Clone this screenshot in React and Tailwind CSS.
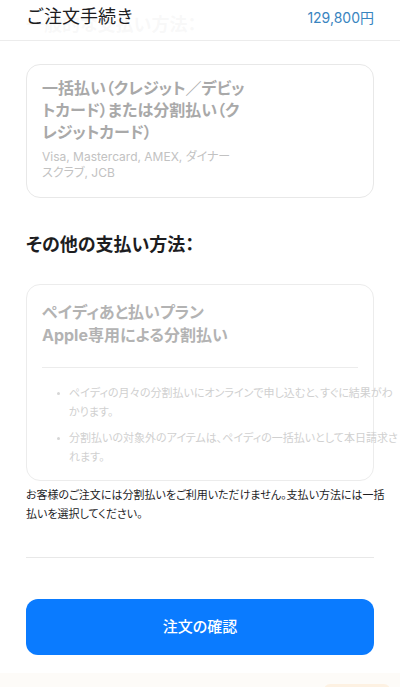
import React from "react";

const font = {
  fontFamily: 'Inter, "Noto Sans CJK JP", sans-serif',
};

const Bullet = ({ lines }) => (
  <li className="flex items-start pl-[15px]">
    <span className="mt-[8px] w-[3px] h-[3px] rounded-full bg-[#d6d6d6] shrink-0" />
    <span className="ml-[9px] whitespace-nowrap">
      {lines.map((l) => (
        <span key={l} className="block">
          {l}
        </span>
      ))}
    </span>
  </li>
);

export default function App() {
  return (
    <div
      className="relative h-[687px] overflow-hidden bg-white text-[#1d1d1f] [font-feature-settings:'palt']"
      style={font}
    >
      {/* sticky header over the scrolled content */}
      <header className="absolute top-0 inset-x-0 z-10 h-[41px] bg-white/[0.97] border-b border-[#ececec] flex items-center justify-between px-[26px] pb-[6px]">
        <h1 className="text-[18px] leading-[26px] [font-feature-settings:normal]">ご注文手続き</h1>
        <span className="text-[14px] text-[#3985bf]">129,800円</span>
      </header>

      <main className="px-[26px] pt-[12px]">
        <h2 className="text-[18px] leading-[26px] font-bold">一般的な支払い方法：</h2>

        <div className="mt-[26px] border border-[#e8e8e8] rounded-[14px] px-[15px] pt-[12px] pb-[16px]">
          <div className="text-[16px] leading-[22px] font-bold text-[#a9a9a9] whitespace-nowrap">
            <span className="block">一括払い（クレジット／デビッ</span>
            <span className="block">トカード）または分割払い（ク</span>
            <span className="block">レジットカード）</span>
          </div>
          <div className="mt-[6px] text-[12px] leading-[16px] text-[#c2c2c2] whitespace-nowrap">
            <span className="block">Visa, Mastercard, AMEX, ダイナー</span>
            <span className="block">スクラブ, JCB</span>
          </div>
        </div>

        <h2 className="mt-[34px] text-[18px] leading-[26px] font-bold">その他の支払い方法：</h2>

        <div className="mt-[26px] border border-[#ececec] rounded-[14px] px-[15px] pt-[16px] pb-[13px]">
          <div className="text-[16px] leading-[23px] font-bold text-[#b3b3b3] whitespace-nowrap">
            <span className="block">ペイディあと払いプラン</span>
            <span className="block">Apple専用による分割払い</span>
          </div>
          <div className="mt-[20px] h-px bg-[#ececec]" />
          <ul className="mt-[16px] flex flex-col gap-[7px] text-[11px] leading-[19px] text-[#d0d0d0]">
            <Bullet
              lines={[
                "ペイディの月々の分割払いにオンラインで申し込むと、すぐに結果がわ",
                "かります。",
              ]}
            />
            <Bullet
              lines={[
                "分割払いの対象外のアイテムは、ペイディの一括払いとして本日請求さ",
                "れます。",
              ]}
            />
          </ul>
        </div>

        <p className="mt-[5px] text-[11px] leading-[19px] whitespace-nowrap">
          <span className="block">お客様のご注文には分割払いをご利用いただけません。支払い方法には一括</span>
          <span className="block">払いを選択してください。</span>
        </p>

        <div className="mt-[33px] h-px bg-[#e8e8e8]" />

        <button className="mt-[41px] w-full h-[56px] rounded-[12px] bg-[#0a7bff] text-white text-[15px] font-medium">
          注文の確認
        </button>
      </main>

      <div className="mt-[18px] h-[20px] bg-[#fdfbf8] flex justify-end pr-[10px] pt-[11px]">
        <div className="w-[66px] h-[20px] rounded-t-[6px] bg-[#fdf1e2]" />
      </div>
    </div>
  );
}
